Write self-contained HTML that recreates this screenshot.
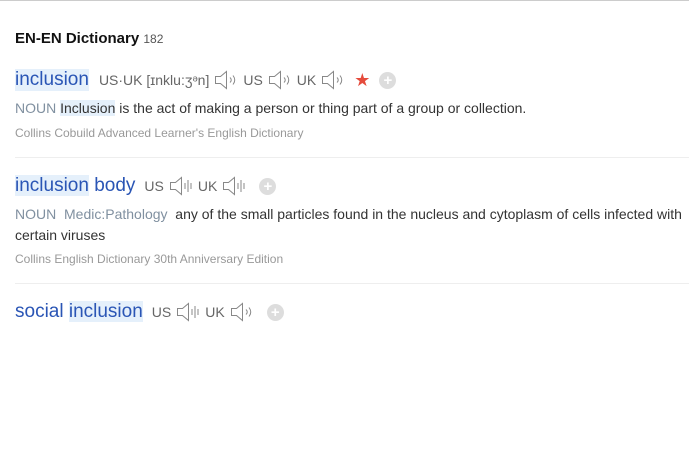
<!DOCTYPE html>
<html><head><meta charset="utf-8"><style>
body{margin:0;width:689px;height:453px;background:#fff;font-family:"Liberation Sans",sans-serif;position:relative;overflow:hidden;border-top:1px solid #ccc;box-sizing:border-box}
.a{position:absolute;white-space:nowrap;display:flex;align-items:center}
.hw{font-size:19px;color:#2a55b5}
.hl{background:#e5f0fb}
.ph{font-size:14px;color:#666;display:flex;align-items:center;gap:5px}
.def{font-size:14px;color:#333}
.pos{color:#8090a0}
.src{font-size:12px;color:#999}
.hr{position:absolute;left:15px;right:0;height:1px;background:#eee}
.plus{display:inline-block;width:17px;height:17px;border-radius:50%;background:#ddd;color:#fff;text-align:center;line-height:17px;font-size:15px;font-weight:bold}
</style></head><body>
<div class="a" style="left:15px;top:29px;font-size:15px;font-weight:bold;color:#111">EN-EN Dictionary&nbsp;<span style="font-weight:normal;font-size:12px;color:#555">182</span></div>

<div class="a" style="left:15px;top:67px;height:24px"><span class="hw hl">inclusion</span>
<span class="ph" style="margin-left:10px">US·UK [ɪnklu:ʒᵊn] <svg width="24" height="20"><path d="M1.5 6.5h5l6-5v17l-6-5h-5z" fill="none" stroke="#888"/><path d="M16 7.5q2.5 2.5 0 5M19 5.5q3.5 4.5 0 9" fill="none" stroke="#888"/></svg> US <svg width="24" height="20"><path d="M1.5 6.5h5l6-5v17l-6-5h-5z" fill="none" stroke="#888"/><path d="M16 7.5q2.5 2.5 0 5M19 5.5q3.5 4.5 0 9" fill="none" stroke="#888"/></svg> UK <svg width="24" height="20"><path d="M1.5 6.5h5l6-5v17l-6-5h-5z" fill="none" stroke="#888"/><path d="M16 7.5q2.5 2.5 0 5M19 5.5q3.5 4.5 0 9" fill="none" stroke="#888"/></svg> <span style="color:#e54b3c;font-size:18px;margin-left:4px">★</span> <span class="plus" style="margin-left:4px">+</span></span></div>
<div class="a def" style="left:15px;top:99px"><span class="pos">NOUN</span>&nbsp;<span class="hl">Inclusion</span>&nbsp;is the act of making a person or thing part of a group or collection.</div>
<div class="a src" style="left:15px;top:125px">Collins Cobuild Advanced Learner's English Dictionary</div>
<div class="hr" style="top:156px"></div>

<div class="a" style="left:15px;top:173px;height:24px"><span class="hw"><span class="hl">inclusion</span> body</span>
<span class="ph" style="margin-left:9px">US <svg width="24" height="20"><path d="M1.5 6.5h5l6-5v17l-6-5h-5z" fill="none" stroke="#888"/><path d="M16 7v6M19 4v12M22 7v6" stroke="#888"/></svg> UK <svg width="24" height="20"><path d="M1.5 6.5h5l6-5v17l-6-5h-5z" fill="none" stroke="#888"/><path d="M16 7v6M19 4v12M22 7v6" stroke="#888"/></svg> <span class="plus" style="margin-left:8px">+</span></span></div>
<div class="a def" style="left:15px;top:203px;white-space:normal;width:672px;line-height:21px;display:block"><span class="pos">NOUN</span>&nbsp; <span class="pos">Medic:Pathology</span>&nbsp; any of the small particles found in the nucleus and cytoplasm of cells infected with certain viruses</div>
<div class="a src" style="left:15px;top:251px">Collins English Dictionary 30th Anniversary Edition</div>
<div class="hr" style="top:282px"></div>

<div class="a" style="left:15px;top:299px;height:24px"><span class="hw">social <span class="hl">inclusion</span></span>
<span class="ph" style="margin-left:9px">US <svg width="24" height="20"><path d="M1.5 6.5h5l6-5v17l-6-5h-5z" fill="none" stroke="#888"/><path d="M16 7v6M19 4v12M22 7v6" stroke="#888"/></svg> UK <svg width="24" height="20"><path d="M1.5 6.5h5l6-5v17l-6-5h-5z" fill="none" stroke="#888"/><path d="M16 7.5q2.5 2.5 0 5M19 5.5q3.5 4.5 0 9" fill="none" stroke="#888"/></svg> <span class="plus" style="margin-left:8px">+</span></span></div>
</body></html>
